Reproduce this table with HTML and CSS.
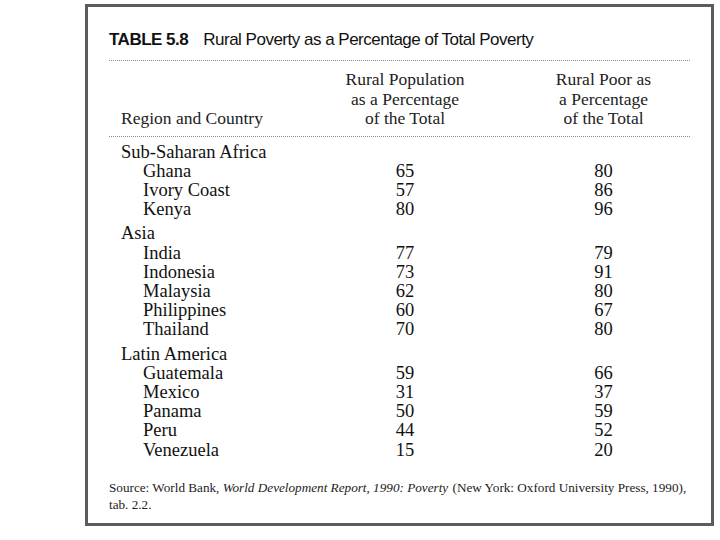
FILE: index.html
```html
<!DOCTYPE html>
<html lang="en">
<head>
<meta charset="utf-8">
<title>Table 5.8</title>
<link rel="stylesheet" href="styles.css">
</head>
<body>
<div class="frame">
  <h1 class="title"><span class="label">TABLE 5.8</span><span class="caption">Rural Poverty as a Percentage of Total Poverty</span></h1>
  <div class="rule"></div>
  <div class="head">
    <div class="hcell hleft">Region and Country</div>
    <div class="hcell hmid">Rural Population<br>as a Percentage<br>of the Total</div>
    <div class="hcell hright">Rural Poor as<br>a Percentage<br>of the Total</div>
  </div>
  <div class="rule"></div>
  <div class="body">
    <div class="group">Sub-Saharan Africa</div>
    <div class="row"><span class="name">Ghana</span><span class="n1">65</span><span class="n2">80</span></div>
    <div class="row"><span class="name">Ivory Coast</span><span class="n1">57</span><span class="n2">86</span></div>
    <div class="row"><span class="name">Kenya</span><span class="n1">80</span><span class="n2">96</span></div>
    <div class="group gap">Asia</div>
    <div class="row"><span class="name">India</span><span class="n1">77</span><span class="n2">79</span></div>
    <div class="row"><span class="name">Indonesia</span><span class="n1">73</span><span class="n2">91</span></div>
    <div class="row"><span class="name">Malaysia</span><span class="n1">62</span><span class="n2">80</span></div>
    <div class="row"><span class="name">Philippines</span><span class="n1">60</span><span class="n2">67</span></div>
    <div class="row"><span class="name">Thailand</span><span class="n1">70</span><span class="n2">80</span></div>
    <div class="group gap">Latin America</div>
    <div class="row"><span class="name">Guatemala</span><span class="n1">59</span><span class="n2">66</span></div>
    <div class="row"><span class="name">Mexico</span><span class="n1">31</span><span class="n2">37</span></div>
    <div class="row"><span class="name">Panama</span><span class="n1">50</span><span class="n2">59</span></div>
    <div class="row"><span class="name">Peru</span><span class="n1">44</span><span class="n2">52</span></div>
    <div class="row"><span class="name">Venezuela</span><span class="n1">15</span><span class="n2">20</span></div>
  </div>
  <p class="source">Source: World Bank, <em class="work">World Development Report, 1990: Poverty</em> (New York: Oxford University Press, 1990),<br>tab. 2.2.</p>
</div>
</body>
</html>
```

FILE: styles.css
```css
html, body {
  margin: 0;
  padding: 0;
  background: #ffffff;
}

.frame {
  box-sizing: border-box;
  margin: 4px 0 0 85px;
  width: 629px;
  height: 522px;
  border: 3px solid #5c5c5c;
  padding: 23px 21px 0 21px;
  color: #111;
  font-family: "Liberation Serif", "Times New Roman", serif;
}

.title {
  margin: 0;
  height: 20px;
  line-height: 20px;
  font-family: "Liberation Sans", Arial, sans-serif;
  font-size: 17px;
  font-weight: normal;
  letter-spacing: -0.5px;
  display: flex;
  gap: 15px;
}

.label {
  font-weight: bold;
}

.rule {
  height: 0;
  border-top: 1px dotted #8a8a8a;
}

.title + .rule {
  margin-top: 10px;
}

.head {
  display: grid;
  grid-template-columns: 206px 180px 1fr;
  align-items: end;
  margin-top: 9px;
  margin-bottom: 7px;
  font-size: 17.5px;
  line-height: 19.5px;
  color: #222;
}

.hleft {
  padding-left: 12px;
}

.hmid {
  text-align: center;
}

.hright {
  text-align: center;
  padding-left: 22px;
}

.body {
  padding-top: 6px;
  font-size: 18.5px;
  line-height: 19.2px;
}

.group {
  padding-left: 12px;
}

.group.gap {
  margin-top: 5px;
}

.row {
  display: grid;
  grid-template-columns: 206px 180px 1fr;
}

.name {
  padding-left: 34px;
}

.n1 {
  text-align: center;
}

.n2 {
  text-align: center;
  padding-left: 22px;
}

.source {
  margin: 19px 0 0 0;
  font-size: 13.2px;
  line-height: 17px;
  color: #222;
  white-space: nowrap;
}

.work {
  padding-right: 1px;
}
```
